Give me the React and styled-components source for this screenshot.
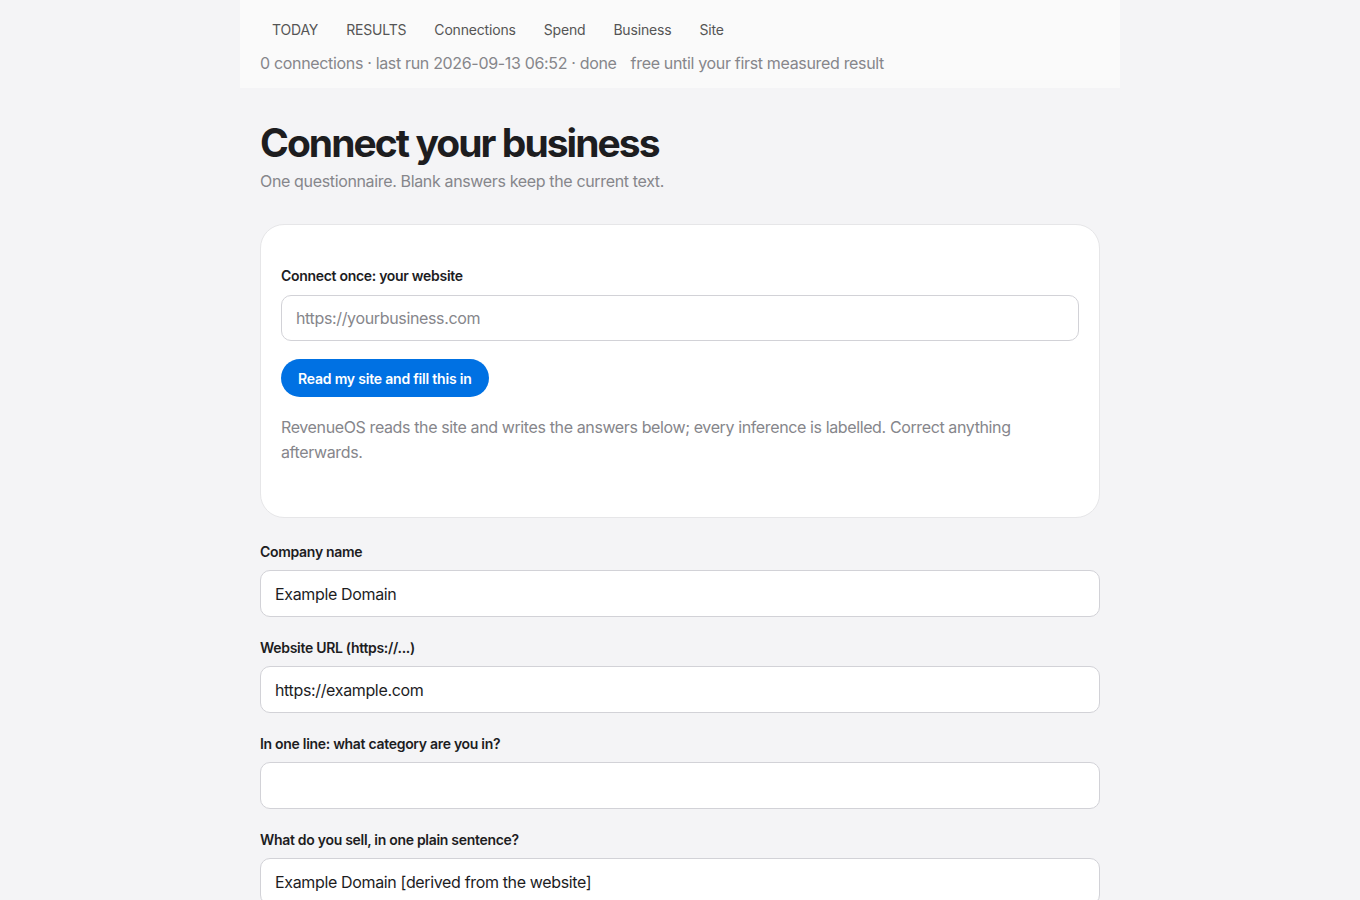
import React from 'react';
import styled, { createGlobalStyle } from 'styled-components';

const GlobalStyle = createGlobalStyle`
	html, body {
		margin: 0;
		padding: 0;
		background: #f4f4f6;
		font-family: Inter, "Noto Sans", "Liberation Sans", sans-serif;
		color: #1d1d1f;
		-webkit-font-smoothing: antialiased;
	}
	* {
		box-sizing: border-box;
	}
`;

const Page = styled.div`
	width: 880px;
	margin: 0 auto;
	min-height: 100vh;
`;

const TopBar = styled.header`
	background: #fafafa;
	padding: 18px 20px 14px;
	height: 88px;
`;

const Nav = styled.nav`
	display: flex;
	gap: 4px;
	margin-bottom: 10px;
`;

const NavLink = styled.a`
	font-size: 14px;
	color: #555;
	padding: 2px 12px;
	line-height: 20px;
	letter-spacing: -0.18px;
	text-decoration: none;
	cursor: pointer;
`;

const Status = styled.div`
	display: flex;
	gap: 14px;
	font-size: 16px;
	line-height: 22px;
	letter-spacing: -0.33px;
	color: #86868b;
`;

const Main = styled.main`
	padding: 32px 20px 40px;
`;

const Title = styled.h1`
	margin: 0;
	font-size: 39px;
	line-height: 46px;
	font-weight: 700;
	letter-spacing: -0.05em;
	color: #1d1d1f;
`;

const Lead = styled.p`
	margin: 3px 0 0;
	font-size: 16px;
	line-height: 24px;
	letter-spacing: -0.35px;
	color: #86868b;
`;

const Card = styled.section`
	margin-top: 31px;
	background: #fff;
	border: 1px solid #e6e6e8;
	border-radius: 24px;
	padding: 41px 20px 52px;
`;

const Field = styled.div`
	display: flex;
	flex-direction: column;
	gap: ${p => p.$labelGap}px;
	margin-bottom: ${p => p.$gap}px;
`;

const Label = styled.label`
	font-size: 14px;
	line-height: 20px;
	font-weight: 600;
	letter-spacing: -0.3px;
	color: #1d1d1f;
`;

const Input = styled.input`
	width: 100%;
	height: ${p => p.$height || 47}px;
	padding: 0 14px;
	font-family: inherit;
	font-size: 16px;
	letter-spacing: -0.35px;
	color: #1d1d1f;
	background: #fff;
	border: 1px solid #d2d2d7;
	border-radius: 10px;
	outline: none;
	&::placeholder {
		color: #86868b;
	}
`;

const PrimaryButton = styled.button`
	align-self: flex-start;
	height: 38px;
	padding: 0 17px;
	font-family: inherit;
	font-size: 14px;
	font-weight: 600;
	letter-spacing: -0.2px;
	color: #fff;
	background: #0071e3;
	border: none;
	border-radius: 19px;
	cursor: pointer;
`;

const Note = styled.p`
	margin: 18px 0 0;
	font-size: 16px;
	line-height: 25px;
	letter-spacing: -0.38px;
	color: #86868b;
`;

const Form = styled.div`
	margin-top: 24px;
`;

const navItems = ['TODAY', 'RESULTS', 'Connections', 'Spend', 'Business', 'Site'];

const fields = [
	{ label: 'Company name', value: 'Example Domain' },
	{ label: 'Website URL (https://...)', value: 'https://example.com' },
	{ label: 'In one line: what category are you in?', value: '' },
	{ label: 'What do you sell, in one plain sentence?', value: 'Example Domain [derived from the website]' },
];

export default function App() {
	return (
		<>
			<GlobalStyle />
			<Page>
				<TopBar>
					<Nav>
						{navItems.map(item => (
							<NavLink key={item}>{item}</NavLink>
						))}
					</Nav>
					<Status>
						<span>0 connections · last run 2026-09-13 06:52 · done</span>
						<span>free until your first measured result</span>
					</Status>
				</TopBar>
				<Main>
					<Title>Connect your business</Title>
					<Lead>One questionnaire. Blank answers keep the current text.</Lead>
					<Card>
						<Field $labelGap={9} $gap={18}>
							<Label>Connect once: your website</Label>
							<Input $height={46} placeholder='https://yourbusiness.com' />
						</Field>
						<PrimaryButton>Read my site and fill this in</PrimaryButton>
						<Note>
							RevenueOS reads the site and writes the answers below; every inference is labelled. Correct anything afterwards.
						</Note>
					</Card>
					<Form>
						{fields.map(f => (
							<Field key={f.label} $labelGap={8} $gap={21}>
								<Label>{f.label}</Label>
								<Input defaultValue={f.value} />
							</Field>
						))}
					</Form>
				</Main>
			</Page>
		</>
	);
}
